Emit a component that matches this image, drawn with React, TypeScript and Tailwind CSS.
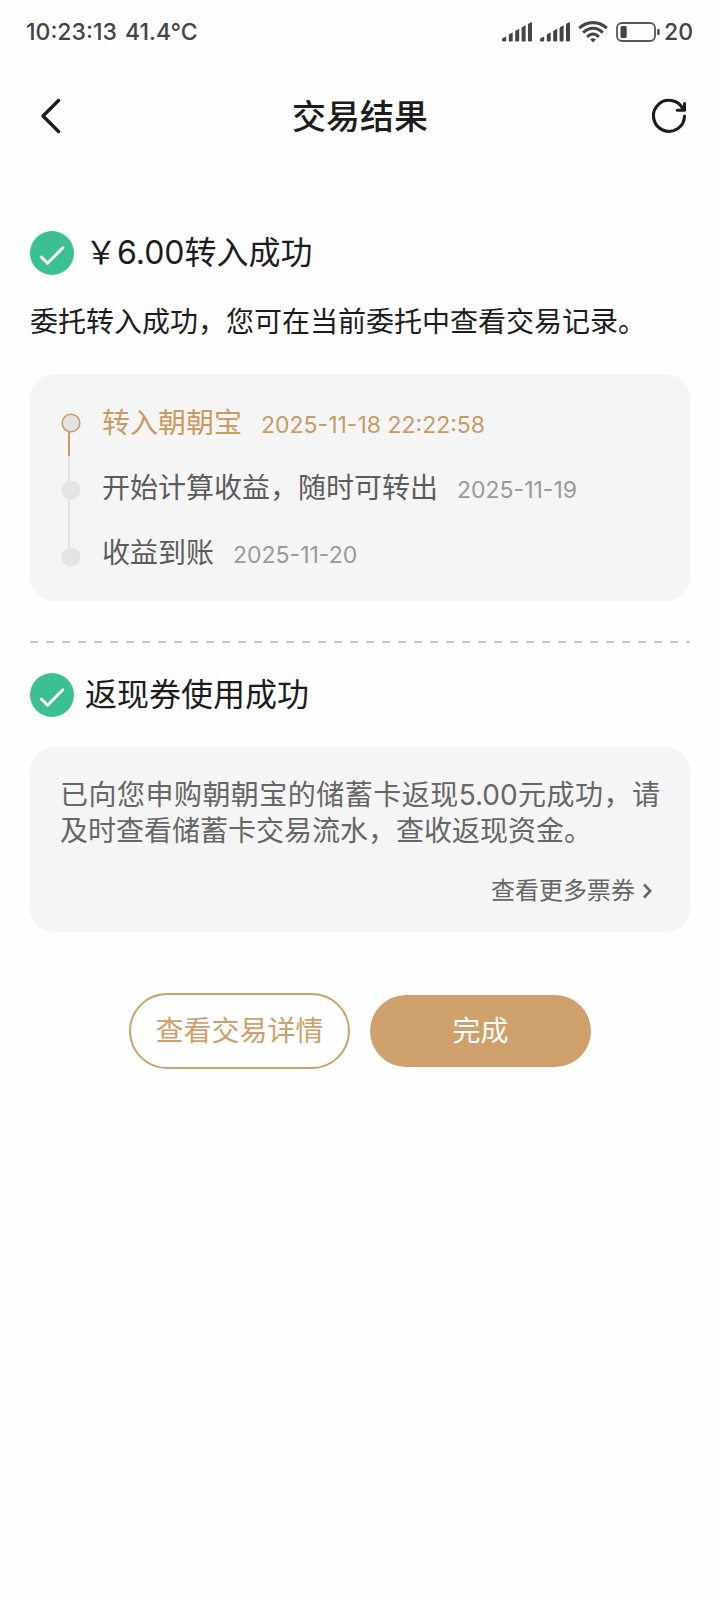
import clsx from "clsx";

const steps = [
  { label: "转入朝朝宝", time: "2025-11-18 22:22:58", active: true },
  { label: "开始计算收益，随时可转出", time: "2025-11-19", active: false },
  { label: "收益到账", time: "2025-11-20", active: false },
];

function SignalIcon() {
  return (
    <svg width="30" height="20" viewBox="0 0 30 20" fill="#444" aria-hidden="true">
      <path d="M0 17.5Q0 16.5 1 16L4.2 14.5V18.5Q4.2 19.5 3.2 19.5H1Q0 19.5 0 18.5Z" />
      <path d="M6.8 13.2Q6.8 12.3 7.6 12L10.7 10.6V18.5Q10.7 19.5 9.7 19.5H7.8Q6.8 19.5 6.8 18.5Z" />
      <path d="M13.2 9.8Q13.2 8.9 14 8.5L17.2 6.8V18.5Q17.2 19.5 16.2 19.5H14.2Q13.2 19.5 13.2 18.5Z" />
      <path d="M19.6 6.4Q19.6 5.5 20.4 5L23.6 3.2V18.5Q23.6 19.5 22.6 19.5H20.6Q19.6 19.5 19.6 18.5Z" />
      <path d="M26 3Q26 2 26.7 1.6L29 .3Q30 0 30 1V18.5Q30 19.5 29 19.5H27Q26 19.5 26 18.5Z" />
    </svg>
  );
}

function WifiIcon() {
  return (
    <svg width="30" height="22" viewBox="0 0 30 22" fill="none" stroke="#444" strokeWidth="3.1" aria-hidden="true">
      <path d="M1.2 7.2Q7 1.6 15 1.6T28.8 7.2" />
      <path d="M5.2 11.6Q9.5 7.3 15 7.3T24.8 11.6" />
      <path d="M9.2 16Q11.8 13 15 13T20.8 16" />
      <path d="M12.2 18.6Q15 16 17.8 18.6L15 21.6Z" fill="#444" stroke="none" />
    </svg>
  );
}

function BatteryIcon() {
  return (
    <svg width="44" height="20" viewBox="0 0 44 20" aria-hidden="true">
      <rect x="1" y="1" width="38" height="18" rx="5" fill="none" stroke="#555" strokeWidth="1.8" />
      <rect x="4.5" y="4" width="6.2" height="12" rx="1.5" fill="#444" />
      <path d="M41.2 7H42.2Q43.6 7 43.6 8V12Q43.6 13 42.2 13H41.2Z" fill="#444" />
    </svg>
  );
}

function SuccessIcon() {
  return (
    <svg className="shrink-0" width="44" height="44" viewBox="0 0 44 44" aria-hidden="true">
      <circle cx="22" cy="22" r="22" fill="#3bbf93" />
      <path d="M11.3 26L17.6 32.2L32.8 16.8" fill="none" stroke="#fff" strokeWidth="3" strokeLinecap="round" />
    </svg>
  );
}

function TimelineRail() {
  return (
    <svg className="shrink-0" width="20" height="195" viewBox="0 0 20 195" aria-hidden="true">
      <path d="M8 66V160" stroke="#e4e4e4" strokeWidth="2" />
      <path d="M8 42V66" stroke="#c99a62" strokeWidth="2" />
      <circle cx="10" cy="33" r="8.8" fill="#e4e4e4" stroke="#c99a62" strokeWidth="1.6" />
      <circle cx="10" cy="100" r="9.6" fill="#e4e4e4" />
      <circle cx="10" cy="167" r="9.6" fill="#e4e4e4" />
    </svg>
  );
}

function StatusBar() {
  return (
    <div className="flex h-16 items-center justify-between pl-[26px] pr-[27px] text-[23px] font-medium text-[#444]">
      <div className="flex gap-2">
        <span>10:23:13</span>
        <span>41.4°C</span>
      </div>
      <div className="flex items-center gap-2">
        <SignalIcon />
        <SignalIcon />
        <WifiIcon />
        <div className="flex items-center gap-1">
          <BatteryIcon />
          <span>20</span>
        </div>
      </div>
    </div>
  );
}

function Header() {
  return (
    <header className="flex h-[104px] items-center justify-between px-8">
      <button aria-label="返回" className="flex w-10 justify-start pl-2">
        <svg width="22" height="36" viewBox="0 0 22 36" fill="none" stroke="#1c1c1c" strokeWidth="3.4" strokeLinecap="round" strokeLinejoin="round">
          <path d="M18.5 2.5L3 18L18.5 33.5" />
        </svg>
      </button>
      <h1 className="text-[34px] font-medium">交易结果</h1>
      <button aria-label="刷新" className="flex w-10 justify-end">
        <svg width="36" height="36" viewBox="0 0 36 36" fill="none" stroke="#1c1c1c" strokeWidth="3.1" strokeLinecap="round" strokeLinejoin="round">
          <path d="M32.5 18A15.5 15.5 0 1 1 31 11.2" />
          <path d="M32.5 5.5V12.2H25.2" />
        </svg>
      </button>
    </header>
  );
}

export default function App() {
  return (
    <div className="min-h-screen bg-[#fefefe] font-['Inter','Noto_Sans_CJK_SC',sans-serif] text-[#1c1c1c]">
      <StatusBar />
      <Header />
      <main className="px-[30px] pt-[63px] pb-10">
        <section>
          <div className="flex h-11 items-center gap-[11px]">
            <SuccessIcon />
            <h2 className="text-[32px]">￥6.00转入成功</h2>
          </div>
          <p className="mt-[27px] text-[28px] leading-10">委托转入成功，您可在当前委托中查看交易记录。</p>
          <div className="mt-8 flex gap-[21px] rounded-3xl bg-[#f5f5f5] px-[31px] py-4">
            <TimelineRail />
            <ol>
              {steps.map((step) => (
                <li
                  key={step.label}
                  className={clsx("flex h-[65px] items-center", step.active ? "text-[#c99a62]" : "text-[#5c5c5c]")}
                >
                  <div className="flex items-baseline gap-[19px]">
                    <span className="text-[28px]">{step.label}</span>
                    <time className={clsx("text-[23px]", !step.active && "text-[#999]")}>{step.time}</time>
                  </div>
                </li>
              ))}
            </ol>
          </div>
        </section>

        <svg className="mt-10 block w-full" height="2" aria-hidden="true">
          <line x1="0" y1="1" x2="100%" y2="1" stroke="#c6c6c6" strokeWidth="2" strokeDasharray="8 8" />
        </svg>

        <section className="mt-[30px]">
          <div className="flex h-11 items-center gap-[11px]">
            <SuccessIcon />
            <h2 className="text-[32px]">返现券使用成功</h2>
          </div>
          <div className="mt-[30px] rounded-3xl bg-[#f5f5f5] px-[30px] pt-[30px] pb-[25px] text-[#666]">
            <p className="text-justify text-[28px] leading-9">
              已向您申购朝朝宝的储蓄卡返现5.00元成功，请及时查看储蓄卡交易流水，查收返现资金。
            </p>
            <a href="#" className="mt-[26px] flex items-center justify-end gap-2 pr-2 text-[24px] leading-8">
              查看更多票券
              <svg width="9" height="16" viewBox="0 0 9 16" fill="none" stroke="#666" strokeWidth="2.6" aria-hidden="true">
                <path d="M1 1.5L7.3 8L1 14.5" />
              </svg>
            </a>
          </div>
        </section>

        <div className="mt-[61px] flex items-center justify-center gap-5">
          <button className="h-[76px] w-[221px] rounded-full border-2 border-[#cda06c] text-[28px] text-[#cda06c]">
            查看交易详情
          </button>
          <button className="h-[72px] w-[221px] rounded-full bg-[#cda06c] text-[28px] text-white">完成</button>
        </div>
      </main>
    </div>
  );
}
